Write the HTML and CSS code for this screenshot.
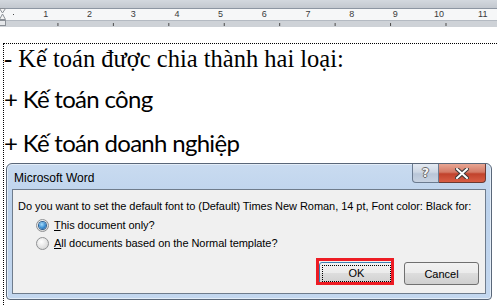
FILE: index.html
```html
<!DOCTYPE html>
<html lang="vi">
<head>
    <meta charset="UTF-8">
    <meta name="viewport" content="width=device-width, initial-scale=1.0">
    <title>Microsoft Word</title>
    <link rel="stylesheet" href="styles.css">
</head>
<body>
    <div class="ruler">
        <div class="ruler-top"></div>
        <div class="ruler-scale">
            <svg class="indent" width="8" height="19" viewBox="0 0 8 19">
                <path d="M0.5 0.5 H6.5 L3.5 5 Z" fill="#f4f4f4" stroke="#8a8f96"/>
                <path d="M3.5 6 L6.5 11.5 H0.5 Z" fill="#f4f4f4" stroke="#8a8f96"/>
                <rect x="0.5" y="12.5" width="6" height="5" fill="#e6e8eb" stroke="#8a8f96"/>
            </svg>
            <div class="numbers">
                <span>1</span><span>2</span><span>3</span><span>4</span><span>5</span><span>6</span>
                <span>7</span><span>8</span><span>9</span><span>10</span><span>11</span>
            </div>
        </div>
        <div class="ruler-tabs"></div>
    </div>

    <div class="page">
        <div class="text-box">
            <p class="line serif">- Kế toán được chia thành hai loại:</p>
            <p class="line sans first">+ Kế toán công</p>
            <p class="line sans">+ Kế toán doanh nghiệp</p>
        </div>
    </div>

    <div class="dialog">
        <div class="titlebar">
            <span class="title">Microsoft Word</span>
            <div class="caption-btns">
                <span class="help-btn">?</span>
                <span class="close-btn">
                    <svg width="14" height="11" viewBox="0 0 14 11">
                        <path d="M2 1 L12 10 M12 1 L2 10" stroke="#3a3a3a" stroke-width="4" stroke-linecap="square"/>
                        <path d="M2 1 L12 10 M12 1 L2 10" stroke="#ffffff" stroke-width="2" stroke-linecap="square"/>
                    </svg>
                </span>
            </div>
        </div>
        <div class="content">
            <p class="message">Do you want to set the default font to (Default) Times New Roman, 14 pt, Font color: Black for:</p>
            <div class="option"><span class="radio checked"></span><span><u>T</u>his document only?</span></div>
            <div class="option"><span class="radio"></span><span><u>A</u>ll documents based on the Normal template?</span></div>
            <div class="buttons">
                <button class="btn default"><span class="focus">OK</span></button>
                <button class="btn">Cancel</button>
            </div>
        </div>
    </div>
    <div class="mark-box"></div>
</body>
</html>
```

FILE: styles.css
```css
* {
    box-sizing: border-box;
}
html, body {
    overflow: hidden;
}
body {
    margin: 0;
    width: 497px;
    height: 305px;
    background: #ffffff;
    font-family: "Liberation Sans", Arial, sans-serif;
    position: relative;
}
.ruler {
    height: 27px;
}
.ruler-top {
    height: 9px;
    background: linear-gradient(#d3d8de, #c3c8cf);
    border-bottom: 1px solid #8d96a2;
}
.ruler-scale {
    position: relative;
    height: 11px;
    background-color: #f6f7f8;
    background-image:
        linear-gradient(to right, #4a4a4a 1px, transparent 1px),
        linear-gradient(to right, #4a4a4a 1px, transparent 1px);
    background-size: 21.85px 1px, 43.7px 5px;
    background-position: 13px 5px, 24px 3px;
    background-repeat: repeat-x;
}
.indent {
    position: absolute;
    left: -1px;
    top: -1px;
}
.numbers {
    display: flex;
    padding-left: 24px;
    font-size: 9px;
    line-height: 11px;
    color: #3a3a3a;
}
.numbers span {
    width: 43.7px;
    text-align: center;
    background: #f6f7f8;
    flex: none;
}
.ruler-tabs {
    height: 7px;
    background-color: #ced2d7;
    border-top: 1px solid #b4bac2;
    background-image: linear-gradient(to right, #4a4a4a 1px, transparent 1px);
    background-size: 55.45px 3px;
    background-position: 2px 2px;
    background-repeat: repeat-x;
}
.page {
    padding: 16px 0 0 3px;
}
.text-box {
    border-top: 1px dotted #000;
    border-left: 1px dotted #000;
    height: 262px;
    overflow: hidden;
}
.line {
    margin: 0;
    color: #000;
    white-space: nowrap;
}
.serif {
    font-family: "Liberation Serif", "Times New Roman", serif;
    font-size: 24.5px;
    line-height: 30px;
}
.sans {
    font-family: Lato, "Liberation Sans", sans-serif;
    font-size: 24px;
    letter-spacing: -0.7px;
    line-height: 44px;
}
.sans.first {
    margin-top: 3px;
}
.dialog {
    position: absolute;
    left: 6px;
    top: 163px;
    width: 486px;
    height: 137px;
    background: linear-gradient(#c9dbf0, #bcd2ec 30%, #c3d7ef);
    border: 1px solid #5a6779;
    border-radius: 6px 6px 4px 4px;
    box-shadow: inset 0 0 0 1px #e3edf8;
    display: flex;
    flex-direction: column;
    padding: 0 5px 5px 5px;
}
.titlebar {
    height: 25px;
    display: flex;
    justify-content: space-between;
    align-items: flex-start;
}
.title {
    font-size: 12px;
    padding: 7px 0 0 2px;
    color: #000;
}
.caption-btns {
    display: flex;
}
.help-btn {
    width: 27px;
    height: 19px;
    border: 1px solid #6b7b90;
    border-top: none;
    border-radius: 0 0 0 4px;
    background: linear-gradient(#e4eaf2, #cdd7e4 45%, #b9c6d8 55%, #c8d3e2);
    text-align: center;
    font-family: "DejaVu Sans", sans-serif;
    font-size: 12px;
    font-weight: bold;
    line-height: 18px;
    color: #f5f5f5;
    text-shadow: 1px 0 #6a6a6a, -1px 0 #6a6a6a, 0 1px #6a6a6a, 0 -1px #6a6a6a;
}
.close-btn {
    width: 47px;
    height: 19px;
    border: 1px solid #6b3a33;
    border-top: none;
    border-left: none;
    border-radius: 0 0 4px 0;
    background: linear-gradient(#e8a694, #d47a66 45%, #c1422c 55%, #d85e45);
    display: flex;
    align-items: center;
    justify-content: center;
}
.content {
    flex: 1;
    background: #f0f0f0;
    border: 1px solid #6f7c8c;
    padding: 10px 6px 0 5px;
    font-family: "Liberation Sans", Tahoma, sans-serif;
    font-size: 11px;
    letter-spacing: -0.05px;
    color: #000;
    display: flex;
    flex-direction: column;
}
.message {
    margin: 0 0 3px 0;
    line-height: 13px;
    white-space: nowrap;
}
.option {
    height: 18px;
    display: flex;
    align-items: center;
    padding-left: 18px;
    gap: 5px;
}
.radio {
    width: 13px;
    height: 13px;
    border-radius: 50%;
    border: 1px solid #8f9193;
    background: radial-gradient(circle at 40% 35%, #ffffff, #dcdcdc 70%, #cfcfcf);
    position: relative;
}
.radio.checked::after {
    content: "";
    position: absolute;
    left: 2px;
    top: 2px;
    width: 7px;
    height: 7px;
    border-radius: 50%;
    background: radial-gradient(circle at 40% 35%, #a6dcfa, #3b8fd3 55%, #1b4f8a);
    box-shadow: 0 0 0 1px #2d5f91;
}
.buttons {
    display: flex;
    justify-content: flex-end;
    gap: 10px;
    margin-top: 10px;
}
.btn {
    width: 75px;
    height: 23px;
    border: 1px solid #707070;
    border-radius: 3px;
    background: linear-gradient(#f2f2f2, #ebebeb 50%, #dddddd 50%, #cfcfcf);
    font-family: "Liberation Sans", Tahoma, sans-serif;
    font-size: 11px;
    color: #000;
    padding: 2px;
}
.btn.default {
    border-color: #3c7fb1;
}
.focus {
    display: block;
    height: 100%;
    border: 1px dotted #000;
    line-height: 15px;
}
.mark-box {
    position: absolute;
    left: 316px;
    top: 258px;
    width: 78px;
    height: 27px;
    border: 3px solid #ed1c24;
}
```
